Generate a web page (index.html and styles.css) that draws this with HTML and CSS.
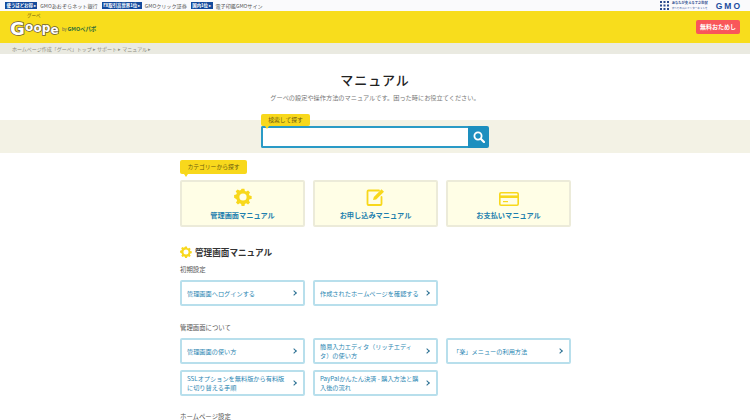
FILE: index.html
```html
<!DOCTYPE html>
<html lang="ja">
<head>
  <meta charset="UTF-8">
  <title>マニュアル</title>
  <link rel="stylesheet" href="styles.css">
</head>
<body>

  <!-- GMO bar -->
  <div class="gmobar">
    <div class="gmobar-left">
      <span class="badge">使うほどお得 ▸</span><span class="gmo-link">GMOあおぞらネット銀行</span>
      <span class="badge">FX取引高世界1位 ▸</span><span class="gmo-link">GMOクリック証券</span>
      <span class="badge">国内1位 ▸</span><span class="gmo-link">電子印鑑GMOサイン</span>
    </div>
    <div class="gmobar-right">
      <svg class="grid-icon" width="9" height="9" viewBox="0 0 9 9" fill="#2a4a8c">
        <rect width="2" height="2"/><rect x="3.5" width="2" height="2"/><rect x="7" width="2" height="2"/>
        <rect y="3.5" width="2" height="2"/><rect x="3.5" y="3.5" width="2" height="2"/><rect x="7" y="3.5" width="2" height="2"/>
        <rect y="7" width="2" height="2"/><rect x="3.5" y="7" width="2" height="2"/><rect x="7" y="7" width="2" height="2"/>
      </svg>
      <div class="gmo-note"><b>あなたが支える丁之助賞</b><span>すべての人にインターネットを</span></div>
      <span class="gmo-logo">GMO</span>
    </div>
  </div>

  <!-- Header -->
  <div class="header">
    <div class="logo">
      <svg width="50" height="32" viewBox="0 0 50 32">
        <text class="logo-kana" x="17" y="6">グーペ</text>
        <text class="logo-text"><tspan class="logo-big" x="0" y="24">G</tspan><tspan x="15" y="20">o</tspan><tspan x="23.4" y="21">o</tspan><tspan x="31.8" y="21">p</tspan><tspan x="40.6" y="23">e</tspan></text>
      </svg>
      <span class="logo-by">by <b>GMOペパボ</b></span>
    </div>
    <a class="trial-btn">無料おためし</a>
  </div>

  <!-- Breadcrumb -->
  <div class="breadcrumb">ホームページ作成「グーペ」トップ ▸ サポート ▸ マニュアル ▸</div>

  <!-- Title -->
  <div class="title-area">
    <h1>マニュアル</h1>
    <p>グーペの設定や操作方法のマニュアルです。困った時にお役立てください。</p>
  </div>

  <!-- Search -->
  <div class="search-band">
    <div class="search-wrap">
      <span class="tag tag-search">検索して探す</span>
      <div class="search-box">
        <div class="search-input"></div>
        <div class="search-btn">
          <svg width="12" height="12" viewBox="0 0 12 12" fill="none" stroke="#fff" stroke-width="1.8">
            <circle cx="5" cy="5" r="3.6"/><path d="M7.7 7.7L11 11" stroke-linecap="round" stroke-width="2.2"/>
          </svg>
        </div>
      </div>
    </div>
  </div>

  <div class="content">
    <span class="tag tag-category">カテゴリーから探す</span>

    <div class="cards">
      <a class="card">
        <svg width="18" height="18" viewBox="0 0 18 18">
          <path class="gear" d="M7.4 0.5h3.2l.5 2.4 1.5.7 2.1-1.3 2.2 2.2-1.3 2.1.7 1.5 2.4.5v0 3.2l-2.4.5-.7 1.5 1.3 2.1-2.2 2.2-2.1-1.3-1.5.7-.5 2.4H7.4l-.5-2.4-1.5-.7-2.1 1.3-2.2-2.2 1.3-2.1-.7-1.5L-1 10.6V7.4l2.4-.5.7-1.5L.8 3.3 3 1.1l2.1 1.3 1.5-.7z" transform="translate(1 .4) scale(.89)"/>
          <circle cx="9" cy="9" r="3.6" fill="#fffee6"/>
        </svg>
        <span>管理画面マニュアル</span>
      </a>
      <a class="card">
        <svg width="20" height="18" viewBox="0 0 20 18" fill="none" stroke="#f8d81c" stroke-width="1.8">
          <path d="M13 2.5H2.5a1 1 0 0 0-1 1V16a1 1 0 0 0 1 1h12a1 1 0 0 0 1-1V9" stroke-linecap="round"/>
          <path d="M7 12l.8-3L15.5 1.2 18 3.7 10.2 11.4z" fill="#f8d81c" stroke="none"/>
        </svg>
        <span>お申し込みマニュアル</span>
      </a>
      <a class="card">
        <svg width="20" height="14" viewBox="0 0 20 14" fill="none">
          <rect x=".8" y=".8" width="18.4" height="12.4" rx="1.2" stroke="#f8d81c" stroke-width="1.6"/>
          <rect x="1" y="3.4" width="18" height="2.6" fill="#f8d81c"/>
          <rect x="4" y="9" width="5" height="1.2" fill="#f8d81c"/>
        </svg>
        <span>お支払いマニュアル</span>
      </a>
    </div>

    <h2 class="section-title">
      <svg width="12" height="12" viewBox="0 0 18 18">
        <path class="gear" d="M7.4 0.5h3.2l.5 2.4 1.5.7 2.1-1.3 2.2 2.2-1.3 2.1.7 1.5 2.4.5v0 3.2l-2.4.5-.7 1.5 1.3 2.1-2.2 2.2-2.1-1.3-1.5.7-.5 2.4H7.4l-.5-2.4-1.5-.7-2.1 1.3-2.2-2.2 1.3-2.1-.7-1.5L-1 10.6V7.4l2.4-.5.7-1.5L.8 3.3 3 1.1l2.1 1.3 1.5-.7z" transform="translate(1 .4) scale(.89)"/>
        <circle cx="9" cy="9" r="3.8" fill="#fff"/>
      </svg>
      管理画面マニュアル
    </h2>

    <h3 class="sub-title">初期設定</h3>
    <div class="links">
      <a class="link-item"><span>管理画面へログインする</span></a>
      <a class="link-item"><span>作成されたホームページを確認する</span></a>
    </div>

    <h3 class="sub-title sub-gap">管理画面について</h3>
    <div class="links">
      <a class="link-item"><span>管理画面の使い方</span></a>
      <a class="link-item"><span>簡易入力エディタ（リッチエディ<br>タ）の使い方</span></a>
      <a class="link-item"><span>「楽」メニューの利用方法</span></a>
      <a class="link-item"><span>SSLオプションを無料版から有料版<br>に切り替える手順</span></a>
      <a class="link-item"><span>PayPalかんたん決済 - 購入方法と購<br>入後の流れ</span></a>
    </div>

    <h3 class="sub-title sub-gap sub-last">ホームページ設定</h3>
  </div>

</body>
</html>
```

FILE: styles.css
```css
html, body {
  height: 420px;
  overflow: hidden;
}

body {
  margin: 0;
  background: #fff;
  color: #333;
  font-family: "Noto Sans CJK JP", "Liberation Sans", sans-serif;
}

h1, h2, h3, p {
  margin: 0;
}

/* GMO bar */
.gmobar {
  height: 11px;
  padding: 0 8px 0 5px;
  background: #fafafc;
  display: flex;
  align-items: center;
  justify-content: space-between;
}

.gmobar-left {
  display: flex;
  align-items: center;
  font-size: 5.1px;
  color: #555;
}

.badge {
  background: #134a9c;
  color: #fff;
  font-size: 4.4px;
  font-weight: 700;
  line-height: 7px;
  padding: 0 1.5px;
  margin-right: 3px;
  white-space: nowrap;
}

.gmo-link {
  margin-right: 4px;
  white-space: nowrap;
}

.gmobar-right {
  display: flex;
  align-items: center;
}

.grid-icon {
  margin-right: 3px;
}

.gmo-note {
  width: 37px;
  display: flex;
  flex-direction: column;
  font-size: 2.6px;
  line-height: 4.4px;
  color: #2a4a8c;
  margin-right: 7px;
  white-space: nowrap;
}

.gmo-note b {
  font-size: 3.3px;
}

.gmo-logo {
  font-family: "Liberation Sans", sans-serif;
  font-size: 8.5px;
  font-weight: 700;
  letter-spacing: 2px;
  color: #1b4d9e;
}

/* Header */
.header {
  height: 32px;
  background: #f8dd1c;
  padding: 0 10px;
  display: flex;
  align-items: center;
  justify-content: space-between;
}

.logo {
  display: flex;
  align-items: center;
  height: 32px;
}

.logo-kana {
  font-size: 4.5px;
  fill: #6b5a10;
}

.logo-text {
  font-family: "DejaVu Sans", sans-serif;
  font-size: 12px;
  font-weight: 700;
  fill: #fff;
  stroke: #6a5a3a;
  stroke-width: 1.5px;
  paint-order: stroke;
}

.logo-big {
  font-size: 18px;
}

.logo-by {
  font-size: 4px;
  color: #555;
  margin: 3px 0 0 2px;
  white-space: nowrap;
}

.logo-by b {
  color: #2e6b3a;
  font-size: 5.4px;
}

.trial-btn {
  width: 44px;
  height: 14px;
  background: #f9565a;
  border-radius: 2px;
  color: #fff;
  font-size: 6px;
  font-weight: 700;
  line-height: 14px;
  text-align: center;
}

/* Breadcrumb */
.breadcrumb {
  height: 11px;
  line-height: 11px;
  background: #eaeae1;
  padding-left: 12px;
  font-size: 5px;
  color: #8b8b80;
}

/* Title */
.title-area {
  height: 66px;
  text-align: center;
  box-sizing: border-box;
  padding-top: 18px;
}

.title-area h1 {
  font-size: 13px;
  font-weight: 500;
  line-height: 16px;
  letter-spacing: 1px;
  color: #222;
}

.title-area p {
  margin-top: 5px;
  font-size: 6.2px;
  line-height: 9px;
  color: #777;
}

/* Search */
.search-band {
  height: 33px;
  background: #f3f2e5;
}

.search-wrap {
  width: 228px;
  margin-left: 261px;
  position: relative;
  padding-top: 6px;
}

.tag {
  background: #f8d81c;
  color: #6b5a10;
  font-size: 5.8px;
  border-radius: 2px;
  white-space: nowrap;
  text-align: center;
}

.tag::after {
  content: "";
  position: absolute;
  left: 4px;
  bottom: -3px;
  border: 2px solid transparent;
  border-bottom: 0;
  border-top: 3px solid #f8d81c;
}

.tag-search {
  position: absolute;
  left: 0;
  top: -6px;
  width: 49px;
  height: 12px;
  line-height: 12px;
}

.search-box {
  height: 22px;
  display: flex;
}

.search-input {
  flex: 1;
  background: #fff;
  border: 2px solid #2a9ac6;
  border-right: 0;
  border-radius: 2px 0 0 2px;
}

.search-btn {
  width: 21px;
  background: #1d8fbf;
  border-radius: 0 2px 2px 0;
  display: flex;
  align-items: center;
  justify-content: center;
}

/* Content */
.content {
  width: 390px;
  margin-left: 180px;
  padding-top: 7px;
}

.tag-category {
  display: block;
  position: relative;
  width: 67px;
  height: 14px;
  line-height: 14px;
}

/* Category cards */
.cards {
  display: grid;
  grid-template-columns: repeat(3, 125px);
  column-gap: 8px;
  margin-top: 6px;
}

.card {
  height: 47px;
  box-sizing: border-box;
  background: #fffee6;
  border: 2px solid #ecebd9;
  border-radius: 2px;
  display: flex;
  flex-direction: column;
  align-items: center;
  justify-content: flex-end;
  gap: 4px;
  padding-bottom: 5px;
  color: #1d7fae;
  font-size: 7.2px;
  font-weight: 700;
}

.gear {
  fill: #f8d81c;
}

.section-title {
  margin-top: 18px;
  display: flex;
  align-items: center;
  gap: 3px;
  font-size: 8.6px;
  font-weight: 700;
  line-height: 14px;
  color: #333;
}

.sub-title {
  margin-top: 6px;
  font-size: 6.4px;
  font-weight: 400;
  line-height: 10px;
  color: #555;
}

.sub-gap {
  margin-top: 17px;
}

.sub-last {
  line-height: 7px;
  height: 7px;
  overflow: hidden;
}

/* Link buttons */
.links {
  display: grid;
  grid-template-columns: repeat(3, 125px);
  column-gap: 8px;
  row-gap: 6px;
  margin-top: 5px;
}

.link-item {
  height: 26px;
  box-sizing: border-box;
  border: 2px solid #b8dfec;
  border-radius: 2px;
  padding: 0 7px 0 5px;
  display: flex;
  align-items: center;
  justify-content: space-between;
  font-size: 6.2px;
  line-height: 9px;
  color: #2a86b2;
}

.link-item span {
  width: 104px;
  white-space: nowrap;
}

.link-item::after {
  content: "";
  width: 3px;
  height: 3px;
  border-top: 1px solid #2a6f92;
  border-right: 1px solid #2a6f92;
  transform: rotate(45deg);
  flex-shrink: 0;
}
```
